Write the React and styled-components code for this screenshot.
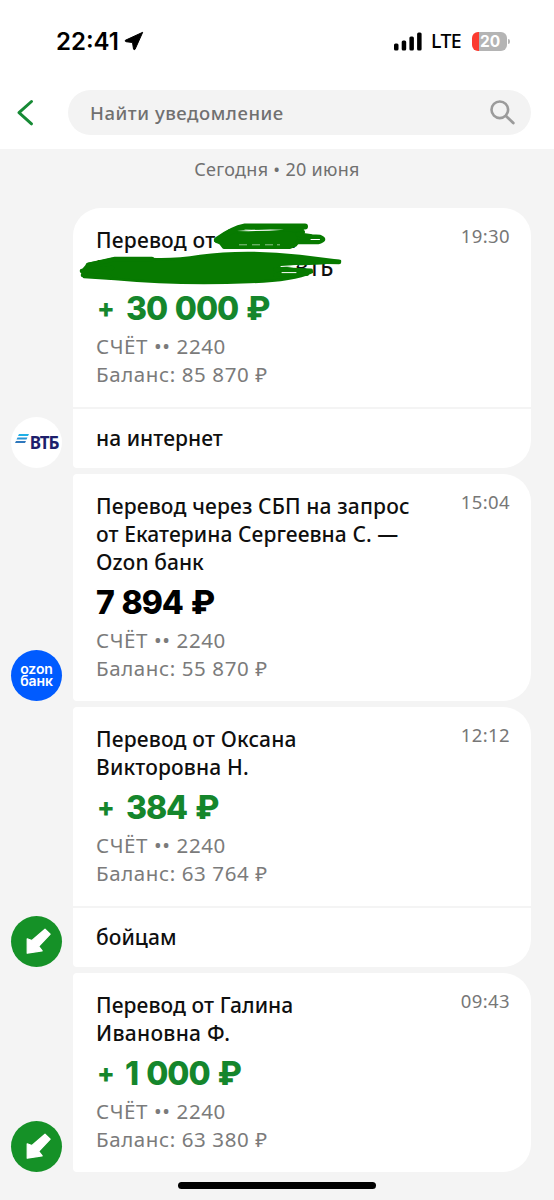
import styled, { createGlobalStyle } from "styled-components"


const EstilosGlobales = createGlobalStyle`
    body{
        margin:0;
        background:#f4f4f4;
        font-family:"Noto Sans", "Open Sans", sans-serif;
    }

    *{
        box-sizing:border-box;
    }
`

const Pantalla = styled.div`
    display:flex;
    flex-direction:column;
    width:554px;
    height:1200px;
    overflow:hidden;
    background:#f4f4f4;
`

const Cabecera = styled.header`
    height:149px;
    background:#ffffff;
`

const BarraEstado = styled.div`
    display:flex;
    justify-content:space-between;
    align-items:center;
    height:82px;
    padding:0 44px 0 56px;
    color:#000000;
`

const Grupo = styled.div`
    display:flex;
    align-items:center;
    gap:${({ $gap }) => $gap}px;

    svg{
        display:block;
    }
`

const Hora = styled.span`
    padding-top:2px;
    font:600 24px/30px "Inter", sans-serif;
`

const Red = styled.span`
    margin-right:2px;
    font-size:19.5px;
    font-weight:500;
    line-height:26px;
    letter-spacing:-.6px;
`

const Bateria = styled.div`
    display:flex;
    align-items:center;

    &::after{
        content:"";
        width:2px;
        height:5px;
        margin-left:1px;
        border-radius:0 2px 2px 0;
        background:#b5b5b5;
    }
`

const Carga = styled.div`
    width:35px;
    height:19px;
    padding-left:8px;
    border-radius:6px;
    background:linear-gradient(90deg, #fb3b30 7px, #b4b4b4 7px);
    color:#ffffff;
    font:700 15.5px/19px "Inter", sans-serif;
`

const BarraBusqueda = styled.div`
    display:flex;
    align-items:center;
    padding:8px 23px 0 16px;

    > svg{
        display:block;
        flex:none;
        margin-right:34px;
    }
`

const Campo = styled.div`
    display:flex;
    flex:1;
    justify-content:space-between;
    align-items:center;
    height:45px;
    padding:0 15px 1px 22px;
    border-radius:23px;
    background:#f3f3f3;
    color:#707070;
    font-size:18.5px;
    font-weight:500;
    letter-spacing:.55px;
    white-space:nowrap;
`

const Fecha = styled.div`
    height:59px;
    padding-top:7px;
    color:#707070;
    font-size:18px;
    line-height:27px;
    letter-spacing:.3px;
    text-align:center;
`

const Lista = styled.main`
    display:flex;
    flex-direction:column;
    gap:6px;
    padding:0 23px 0 11px;
`

const Fila = styled.article`
    display:flex;
    align-items:flex-end;
    gap:11px;
`

const Avatar = styled.div`
    display:flex;
    flex:none;
    justify-content:center;
    align-items:center;
    width:51px;
    height:51px;
    border-radius:50%;
    background:${({ $fondo }) => $fondo};
    overflow:hidden;
`

const Vtb = styled.div`
    display:flex;
    align-items:flex-start;
    gap:1px;
    color:#1d1f6c;
    font-size:17px;
    font-weight:700;
    line-height:18px;
    letter-spacing:-1.2px;
`

const Ozon = styled.div`
    padding-bottom:2px;
    color:#ffffff;
    font:600 14px/12px "Inter", sans-serif;
    letter-spacing:-.1px;
    text-align:center;
`

const Tarjeta = styled.div`
    position:relative;
    flex:1;
    border-radius:${({ $primera }) => $primera ? "28px" : "4px"} 28px 28px 4px;
    background:#ffffff;
`

const Contenido = styled.div`
    display:flex;
    justify-content:space-between;
    padding:18px 21px 18px 23px;
`

const Linea = styled.div`
    height:28px;
    color:#0f0f0f;
    font-size:21px;
    font-weight:500;
    line-height:28px;
    letter-spacing:${({ $espacio }) => $espacio ?? .4}px;
    white-space:nowrap;
`

const Dato = styled(Linea)`
    color:#7b7b7b;
    font-size:20.5px;
    font-weight:400;
    line-height:27px;
    letter-spacing:.6px;
`

const Resto = styled.span`
    margin-left:${({ $hueco }) => $hueco}px;
`

const Importe = styled.div`
    display:flex;
    align-items:center;
    height:51px;
    padding-top:3px;
    color:${({ $entrada }) => $entrada ? "#15862c" : "#000000"};
    font:800 32px/50px "Inter", sans-serif;
    letter-spacing:${({ $espacio }) => $espacio}px;
    word-spacing:2px;
    white-space:nowrap;
`

const Mas = styled.span`
    width:${({ $ancho }) => $ancho}px;
    padding:0 0 2px 1px;
    font-size:26px;
`

const Momento = styled.time`
    margin-top:-4px;
    color:#777777;
    font-size:18.5px;
    line-height:28px;
    letter-spacing:.4px;
`

const Mensaje = styled(Linea)`
    height:61px;
    padding-left:23px;
    border-top:2px solid #f4f4f4;
    line-height:58px;
    letter-spacing:.05px;
`

/* trazo a mano sobre el nombre */
const Tachado = styled.svg`
    position:absolute;
    left:2px;
    top:10px;
`

const Inicio = styled.div`
    width:198px;
    height:7px;
    margin:10px 0 0 178px;
    border-radius:4px;
    background:#000000;
`

const LogoVtb = () => (
    <Vtb>
        <svg width="14" height="11" viewBox="0 0 14 11">
            <path d="M4 0h10l-1 2H3z" fill="#1fb0e6" />
            <path d="M2.500 3.500h10l-1 2h-10z" fill="#2793d6" />
            <path d="M1 7h10l-1 2H0z" fill="#2f78bd" />
        </svg>
        ВТБ
    </Vtb>
)

const Flecha = () => (
    <svg width="51" height="51" viewBox="0 0 51 51">
        <path
            d="M34 13.200 39.200 18.200 27.700 30.300 31.200 34.800 16.200 37.200V22.800L20.900 24.500z"
            fill="#ffffff" stroke="#ffffff" strokeWidth="1.200" strokeLinejoin="round"
        />
    </svg>
)

const Garabato = () => (
    <Tachado width="275" height="70" viewBox="75 218 275 70">
        <g fill="#077a00" stroke="#077a00" strokeLinecap="round" strokeLinejoin="round">
            <path d="M216 240.500 230 231 240 232 290 229.500 303 232 299 240 295 245 290 247 224 247 221 243z" strokeWidth="4" />
            <path d="M217 240Q232 229 245 226.500L305 226.500" fill="none" strokeWidth="6" />
            <path d="M285 230 302 229" fill="none" strokeWidth="4" />
            <path d="M298 234.500 312 236.500 320 237Q327 240 318 242L298 242" strokeWidth="4.500" />
            <path d="M88 264Q100 262 112 259L152 259Q175 260 200 256 245 250 300 256L340 261Q325 264 295 264L279 267 298 270 279 273 312 272Q292 281 250 282 180 285 115 279L84 277 82 271z" strokeWidth="2.500" />
            <path d="M82 271 112 268M88 265 115 259 152 259M83 275 110 277M290 261 339 262" fill="none" strokeWidth="4.500" />
            <path d="M275 269 311 270.500M275 275 307 274" fill="none" strokeWidth="4" />
        </g>
        <path d="M237 231Q260 229 284 229.800 260 231.600 237 231z" fill="#ffffff" />
        <path d="M281 266.500 297 265.500M282 272.600h14" stroke="#ffffff" strokeWidth="1" strokeLinecap="round" />
        <path d="M311 239.500h8.500" stroke="#ffffff" strokeWidth="1" strokeLinecap="round" />
        <path d="M239 244.800h8M252 244.800h8M265 244.800h8M277 244.800h3" stroke="#8fc48b" strokeWidth="1" />
    </Tachado>
)

function Notificacion ({ avatar, fondo, lineas, hora, mas, suma, espacio, saldo, mensaje, primera, children }) {
    return (
        <Fila>
            <Avatar $fondo={fondo}>{avatar}</Avatar>
            <Tarjeta $primera={primera}>
                <Contenido>
                    <div>
                        {lineas.map(([texto, esp], i) => <Linea key={i} $espacio={esp}>{texto}</Linea>)}
                        <Importe $entrada={!!mas} $espacio={espacio}>
                            {mas && <Mas $ancho={mas}>+</Mas>}
                            {suma} ₽
                        </Importe>
                        <Dato>СЧЁТ •• 2240</Dato>
                        <Dato>Баланс: {saldo} ₽</Dato>
                    </div>
                    <Momento>{hora}</Momento>
                </Contenido>
                {mensaje && <Mensaje>{mensaje}</Mensaje>}
                {children}
            </Tarjeta>
        </Fila>
    )
}

function App () {
    return <>
        <EstilosGlobales />
        <Pantalla>
            <Cabecera>
                <BarraEstado>
                    <Grupo $gap={5}>
                        <Hora>22:41</Hora>
                        <svg width="20" height="20" viewBox="0 0 20 20">
                            <path d="M18.700 1.300 1.300 9.300Q.800 10.300 2 10.700L8.500 11.500 9.500 18Q10 19.300 11 18.400z" stroke="#000" strokeWidth="1" strokeLinejoin="round" />
                        </svg>
                    </Grupo>
                    <Grupo $gap={9}>
                        <svg width="28" height="19" viewBox="0 0 28 19">
                            <rect x="0" y="11.500" width="4.500" height="7" rx="1.500" />
                            <rect x="7.700" y="8.500" width="4.500" height="10" rx="1.500" />
                            <rect x="15.400" y="4.500" width="4.500" height="14" rx="1.500" />
                            <rect x="23.100" y=".500" width="4.500" height="18" rx="1.500" />
                        </svg>
                        <Red>LTE</Red>
                        <Bateria>
                            <Carga>20</Carga>
                        </Bateria>
                    </Grupo>
                </BarraEstado>
                <BarraBusqueda>
                    <svg width="18" height="27" viewBox="0 0 18 27">
                        <path d="M15.500 2.500 3 13.700 15.500 24.800" fill="none" stroke="#168a35" strokeWidth="3" strokeLinecap="round" strokeLinejoin="round" />
                    </svg>
                    <Campo>
                        Найти уведомление
                        <svg width="27" height="27" viewBox="0 0 27 27">
                            <circle cx="10.800" cy="10.800" r="8.300" fill="none" stroke="#9b9b9b" strokeWidth="2.600" />
                            <path d="M17 17 24.300 24" stroke="#9b9b9b" strokeWidth="2.800" strokeLinecap="round" />
                        </svg>
                    </Campo>
                </BarraBusqueda>
            </Cabecera>
            <Fecha>Сегодня • 20 июня</Fecha>
            <Lista>
                <Notificacion
                    primera
                    avatar={<LogoVtb />}
                    fondo="#ffffff"
                    lineas={[
                        [<>Перевод от<Resto $hueco={75}>г</Resto></>, .2],
                        [<>В<Resto $hueco={185}>ВТБ</Resto></>, 0],
                    ]}
                    hora="19:30"
                    mas={30}
                    suma="30 000"
                    espacio={-1.1}
                    saldo="85 870"
                    mensaje="на интернет"
                >
                    <Garabato />
                </Notificacion>
                <Notificacion
                    avatar={<Ozon>ozon<br />банк</Ozon>}
                    fondo="#005bff"
                    lineas={[
                        ["Перевод через СБП на запрос", .15],
                        ["от Екатерина Сергеевна С. —", .08],
                        ["Ozon банк", .05],
                    ]}
                    hora="15:04"
                    suma="7 894"
                    espacio={-1.1}
                    saldo="55 870"
                />
                <Notificacion
                    avatar={<Flecha />}
                    fondo="#159127"
                    lineas={[
                        ["Перевод от Оксана", .17],
                        ["Викторовна Н.", .15],
                    ]}
                    hora="12:12"
                    mas={30}
                    suma="384"
                    espacio={-1.1}
                    saldo="63 764"
                    mensaje="бойцам"
                />
                <Notificacion
                    avatar={<Flecha />}
                    fondo="#159127"
                    lineas={[
                        ["Перевод от Галина", .08],
                        ["Ивановна Ф.", .3],
                    ]}
                    hora="09:43"
                    mas={29}
                    suma="1 000"
                    espacio={-1}
                    saldo="63 380"
                />
            </Lista>
            <Inicio />
        </Pantalla>
    </>
}

export default App
